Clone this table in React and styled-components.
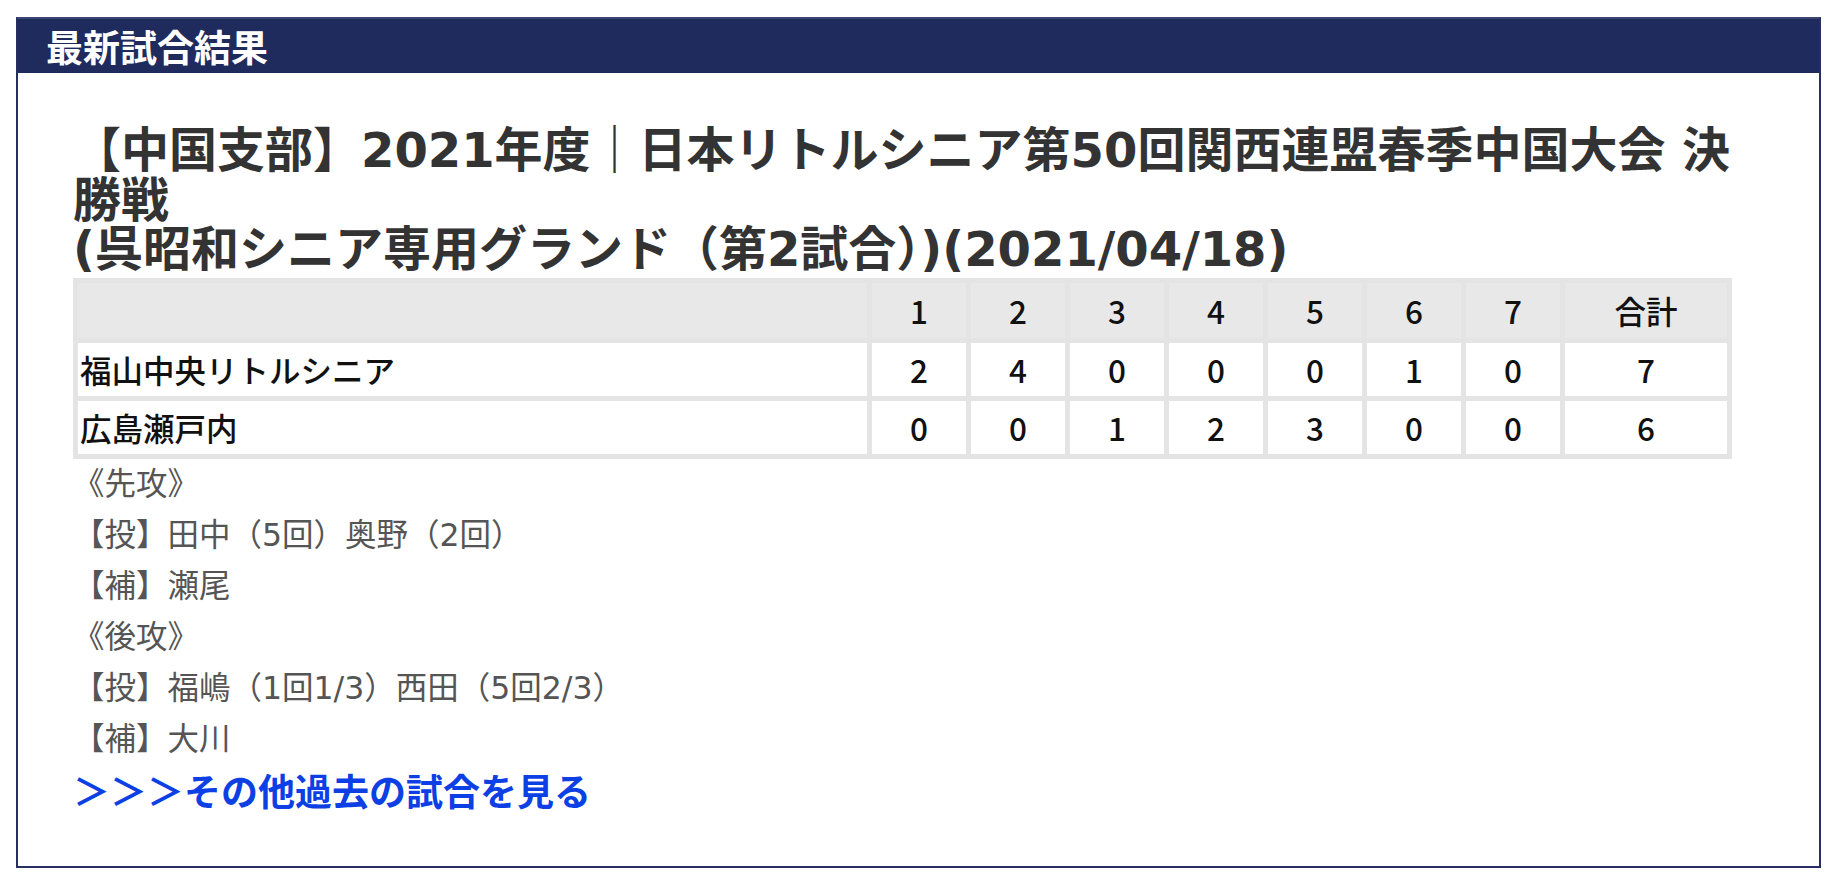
import React from 'react';
import styled, { createGlobalStyle } from 'styled-components';

const GlobalStyle = createGlobalStyle`
  body {
    margin: 0;
    background: #fff;
    font-family: "Noto Sans CJK JP", "Noto Sans", sans-serif;
  }
`;

const Page = styled.div`
  padding: 17px 0 0 16px;
`;

const Panel = styled.section`
  width: 1805px;
  box-sizing: border-box;
  border: 2px solid #262f5f;
  border-top-color: #3b4675;
`;

const PanelHeader = styled.h2`
  margin: 0;
  height: 54px;
  display: flex;
  align-items: center;
  padding-left: 28px;
  background: #1f2b5d;
  color: #fff;
  font-size: 37px;
  font-weight: 700;
`;

const PanelBody = styled.div`
  padding: 53px 87px 51px 55px;
`;

/* latin glyphs in the reference are wider than Noto's, so DejaVu takes them */
const Title = styled.h3`
  margin: 0;
  width: 1690px;
  font-family: "DejaVu Sans", "Noto Sans CJK JP", sans-serif;
  font-size: 48px;
  line-height: 49.5px;
  font-weight: 700;
  color: #333;
`;

const ScoreTable = styled.table`
  margin-top: 3px;
  width: 100%;
  table-layout: fixed;
  border-spacing: 5px;
  background: #e4e4e4;
  font-size: 31.5px;
  font-weight: 500;
  color: #111;
`;

const HeadCell = styled.th`
  height: 55px;
  padding: 0;
  background: #e8e8e8;
  font-weight: 500;
  text-align: center;
`;

const Cell = styled.td`
  height: 53px;
  padding: 0 0 0 ${(p) => (p.$name ? '2px' : '0')};
  background: #fff;
  text-align: ${(p) => (p.$name ? 'left' : 'center')};
  white-space: nowrap;
`;

const Notes = styled.div`
  font-family: "DejaVu Sans", "Noto Sans CJK JP", sans-serif;
  font-size: 31.5px;
  line-height: 51px;
  color: #555;
`;

const NoteLine = styled.div``;

const MoreLink = styled.a`
  display: block;
  font-size: 37px;
  line-height: 50px;
  font-weight: 700;
  color: #0c3fe4;
  text-decoration: none;
`;

const innings = [1, 2, 3, 4, 5, 6, 7];

const teams = [
  { name: '福山中央リトルシニア', scores: [2, 4, 0, 0, 0, 1, 0], total: 7 },
  { name: '広島瀬戸内', scores: [0, 0, 1, 2, 3, 0, 0], total: 6 },
];

const notes = [
  '《先攻》',
  '【投】田中（5回）奥野（2回）',
  '【補】瀬尾',
  '《後攻》',
  '【投】福嶋（1回1/3）西田（5回2/3）',
  '【補】大川',
];

export default function App() {
  return (
    <>
      <GlobalStyle />
      <Page>
        <Panel>
          <PanelHeader>最新試合結果</PanelHeader>
          <PanelBody>
            <Title>
              【中国支部】2021年度｜日本リトルシニア第50回関西連盟春季中国大会 決勝戦
              <br />
              (呉昭和シニア専用グランド（第2試合）)(2021/04/18)
            </Title>
            <ScoreTable>
              <colgroup>
                <col />
                {innings.map((i) => (
                  <col key={i} style={{ width: 94 }} />
                ))}
                <col style={{ width: 162 }} />
              </colgroup>
              <thead>
                <tr>
                  <HeadCell />
                  {innings.map((i) => (
                    <HeadCell key={i}>{i}</HeadCell>
                  ))}
                  <HeadCell>合計</HeadCell>
                </tr>
              </thead>
              <tbody>
                {teams.map((t) => (
                  <tr key={t.name}>
                    <Cell $name>{t.name}</Cell>
                    {t.scores.map((s, i) => (
                      <Cell key={i}>{s}</Cell>
                    ))}
                    <Cell>{t.total}</Cell>
                  </tr>
                ))}
              </tbody>
            </ScoreTable>
            <Notes>
              {notes.map((n) => (
                <NoteLine key={n}>{n}</NoteLine>
              ))}
            </Notes>
            <MoreLink href="#">＞＞＞その他過去の試合を見る</MoreLink>
          </PanelBody>
        </Panel>
      </Page>
    </>
  );
}
